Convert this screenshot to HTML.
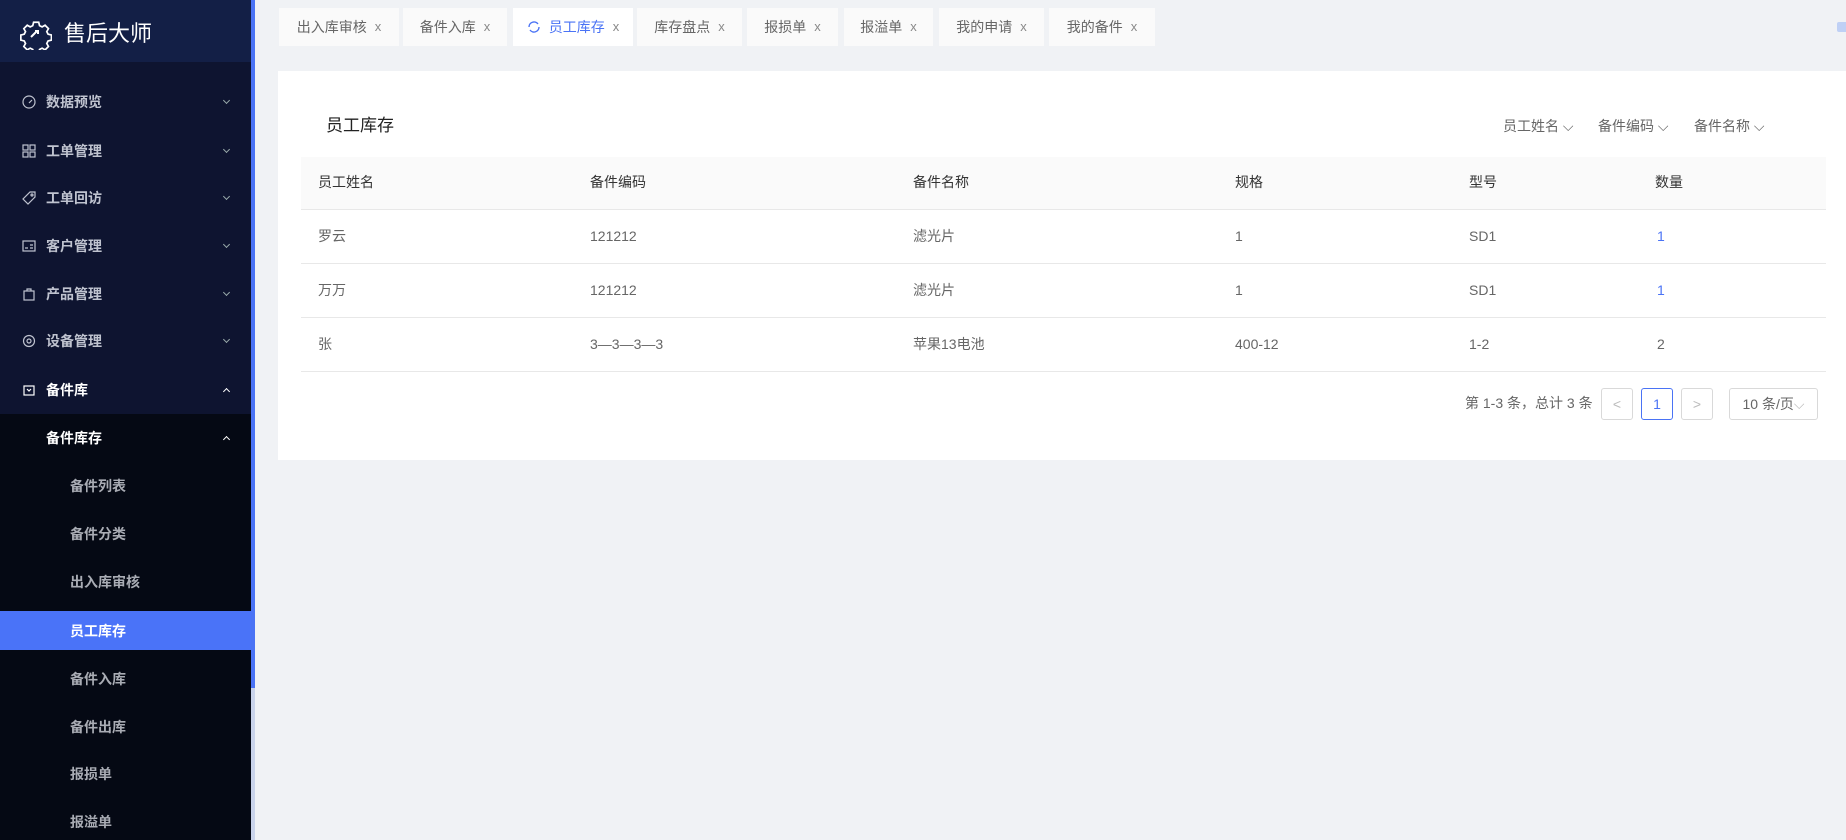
<!DOCTYPE html>
<html><head><meta charset="utf-8"><style>
*{margin:0;padding:0;box-sizing:border-box}
body{width:1846px;height:840px;overflow:hidden;background:#f0f2f5;font-family:"Liberation Sans","Noto Sans CJK SC",sans-serif;font-size:14px;line-height:20px;color:#666;position:relative}
.side{position:absolute;left:0;top:0;width:251px;height:840px;background:#0e1430}
.bar{position:absolute;left:251px;top:0;width:4px;height:688px;background:#4a73f5}
.bar2{position:absolute;left:251px;top:688px;width:4px;height:152px;background:#c9d3ea}
.logo{height:62px;background:#131f46;display:flex;align-items:center;padding-left:20px;padding-top:6px;color:#fff;font-size:22px;line-height:30px}
.logo svg{margin-right:12px}
.mi{position:absolute;left:0;width:251px;height:48px;display:flex;align-items:center;color:#bfc3cf;font-weight:bold;font-size:14px}
.mi .ic{position:absolute;left:22px;width:14px;height:14px}
.mi .t{position:absolute;left:46px}
.mi .ar{position:absolute;left:224px;width:5px;height:5px;border-right:1.5px solid #9aa;border-bottom:1.5px solid #9aa;transform:rotate(45deg);top:20px}
.mi .up{transform:rotate(-135deg);top:23px;border-color:#fff}
.sub{position:absolute;left:0;top:414px;width:251px;height:426px;background:#050914}
.si{position:absolute;left:70px;color:#a9acb4;font-weight:bold}
.tab{position:absolute;top:8px;height:38px;background:#fafafa;display:flex;align-items:center;justify-content:center;font-size:14px;color:#666}
.tab .x{margin-left:8px;color:#888;font-size:13px}
.card{position:absolute;left:278px;top:71px;width:1568px;height:389px;background:#fff}
.cell{position:absolute;font-size:14px;line-height:20px;color:#666}
.hline{position:absolute;left:301px;width:1525px;height:1px;background:#e8e8e8}
.pg{position:absolute;top:388px;height:32px;border:1px solid #d9d9d9;border-radius:3px;display:flex;align-items:center;justify-content:center;color:#bbb;background:#fff}
</style></head><body>
<div class="side">
<div class="logo"><svg width="32" height="32" viewBox="0 0 32 32" fill="none" stroke="#fff" stroke-width="2"><path d="M13 2h6l1 4 3 1.5 3.5-2 4 4-2 3.5 1.5 3 4 1v6l-4 1-1.5 3 2 3.5-4 4-3.5-2-3 1.5-1 4h-6l-1-4-3-1.5-3.5 2-4-4 2-3.5-1.5-3-4-1v-6l4-1 1.5-3-2-3.5 4-4 3.5 2 3-1.5z" transform="scale(0.85) translate(3,3)"/><path d="M11 19l6-6m-2 0h3v3"/></svg>售后大师</div>
</div>
<div class="sub"></div>
<div class="bar"></div><div class="bar2"></div>
<div class="mi" style="top:78px"><svg class="ic" viewBox="0 0 14 14" fill="none" stroke="#bfc3cf" stroke-width="1.2"><circle cx="7" cy="7" r="6"/><path d="M7 8l3-3"/></svg><span class="t">数据预览</span><span class="ar"></span></div>
<div class="mi" style="top:127px"><svg class="ic" viewBox="0 0 14 14" fill="none" stroke="#bfc3cf" stroke-width="1.2"><rect x="1" y="1" width="5" height="5"/><rect x="8" y="1" width="5" height="5"/><rect x="1" y="8" width="5" height="5"/><rect x="8" y="8" width="5" height="5"/></svg><span class="t">工单管理</span><span class="ar"></span></div>
<div class="mi" style="top:174px"><svg class="ic" viewBox="0 0 14 14" fill="none" stroke="#bfc3cf" stroke-width="1.2"><path d="M8 1h5v5l-7 7-5-5z"/><circle cx="10" cy="4" r="1"/></svg><span class="t">工单回访</span><span class="ar"></span></div>
<div class="mi" style="top:222px"><svg class="ic" viewBox="0 0 14 14" fill="none" stroke="#bfc3cf" stroke-width="1.2"><rect x="1" y="2" width="12" height="10"/><path d="M3 9h3M8 6h3M8 9h3"/></svg><span class="t">客户管理</span><span class="ar"></span></div>
<div class="mi" style="top:270px"><svg class="ic" viewBox="0 0 14 14" fill="none" stroke="#bfc3cf" stroke-width="1.2"><rect x="2" y="4" width="10" height="9"/><path d="M5 4V2h4v2"/></svg><span class="t">产品管理</span><span class="ar"></span></div>
<div class="mi" style="top:317px"><svg class="ic" viewBox="0 0 14 14" fill="none" stroke="#bfc3cf" stroke-width="1.2"><circle cx="7" cy="7" r="5.5"/><circle cx="7" cy="7" r="2"/></svg><span class="t">设备管理</span><span class="ar"></span></div>
<div class="mi" style="top:366px;color:#fff"><svg class="ic" viewBox="0 0 14 14" fill="none" stroke="#fff" stroke-width="1.2"><rect x="2" y="3" width="10" height="9"/><path d="M5 6l2 2 2-2"/></svg><span class="t">备件库</span><span class="ar up"></span></div>
<div class="mi" style="top:414px;color:#fff"><span class="t">备件库存</span><span class="ar up"></span></div>
<div class="si" style="top:476px">备件列表</div>
<div class="si" style="top:524px">备件分类</div>
<div class="si" style="top:572px">出入库审核</div>
<div style="position:absolute;left:0;top:611px;width:251px;height:39px;background:#4a73f8"></div>
<div class="si" style="top:621px;color:#fff">员工库存</div>
<div class="si" style="top:669px">备件入库</div>
<div class="si" style="top:717px">备件出库</div>
<div class="si" style="top:764px">报损单</div>
<div class="si" style="top:812px">报溢单</div>

<div class="tab" style="left:279px;width:120px">出入库审核<span class="x">x</span></div>
<div class="tab" style="left:403px;width:104px">备件入库<span class="x">x</span></div>
<div class="tab" style="left:513px;width:120px;background:#fff;color:#4a73f5"><svg width="14" height="14" viewBox="0 0 14 14" fill="none" stroke="#4a73f5" stroke-width="1.4" style="margin-right:8px"><path d="M12 7a5 5 0 0 1-9 3M2 7a5 5 0 0 1 9-3"/></svg>员工库存<span class="x">x</span></div>
<div class="tab" style="left:637px;width:105px">库存盘点<span class="x">x</span></div>
<div class="tab" style="left:747px;width:91px">报损单<span class="x">x</span></div>
<div class="tab" style="left:844px;width:89px">报溢单<span class="x">x</span></div>
<div class="tab" style="left:939px;width:105px">我的申请<span class="x">x</span></div>
<div class="tab" style="left:1049px;width:106px">我的备件<span class="x">x</span></div>
<div style="position:absolute;left:1837px;top:22px;width:12px;height:10px;background:#bfd0f5;border-radius:2px"></div>

<div class="card"></div>
<div class="cell" style="left:326px;top:116px;font-size:17px;color:#222">员工库存</div>
<div class="cell" style="left:1503px;top:116px">员工姓名 ⌵</div>
<div class="cell" style="left:1598px;top:116px">备件编码 ⌵</div>
<div class="cell" style="left:1694px;top:116px">备件名称 ⌵</div>
<div style="position:absolute;left:301px;top:157px;width:1525px;height:53px;background:#fafafa"></div>
<div class="hline" style="top:209px"></div><div class="hline" style="top:263px"></div><div class="hline" style="top:317px"></div><div class="hline" style="top:371px"></div>
<div class="cell" style="left:318px;top:172px;color:#333">员工姓名</div><div class="cell" style="left:590px;top:172px;color:#333">备件编码</div><div class="cell" style="left:913px;top:172px;color:#333">备件名称</div><div class="cell" style="left:1235px;top:172px;color:#333">规格</div><div class="cell" style="left:1469px;top:172px;color:#333">型号</div><div class="cell" style="left:1655px;top:172px;color:#333">数量</div>
<div class="cell" style="left:318px;top:226px">罗云</div><div class="cell" style="left:590px;top:226px">121212</div><div class="cell" style="left:913px;top:226px">滤光片</div><div class="cell" style="left:1235px;top:226px">1</div><div class="cell" style="left:1469px;top:226px">SD1</div><div class="cell" style="left:1657px;top:226px;color:#4a73f5">1</div>
<div class="cell" style="left:318px;top:280px">万万</div><div class="cell" style="left:590px;top:280px">121212</div><div class="cell" style="left:913px;top:280px">滤光片</div><div class="cell" style="left:1235px;top:280px">1</div><div class="cell" style="left:1469px;top:280px">SD1</div><div class="cell" style="left:1657px;top:280px;color:#4a73f5">1</div>
<div class="cell" style="left:318px;top:334px">张</div><div class="cell" style="left:590px;top:334px">3—3—3—3</div><div class="cell" style="left:913px;top:334px">苹果13电池</div><div class="cell" style="left:1235px;top:334px">400-12</div><div class="cell" style="left:1469px;top:334px">1-2</div><div class="cell" style="left:1657px;top:334px">2</div>
<div class="cell" style="left:1465px;top:393px">第 1-3 条，总计 3 条</div>
<div class="pg" style="left:1601px;width:32px">&lt;</div>
<div class="pg" style="left:1641px;width:32px;border-color:#4a73f5;color:#4a73f5">1</div>
<div class="pg" style="left:1681px;width:32px">&gt;</div>
<div class="pg" style="left:1729px;width:89px;color:#666">10 条/页<span style="color:#bbb">⌵</span></div>
</body></html>
